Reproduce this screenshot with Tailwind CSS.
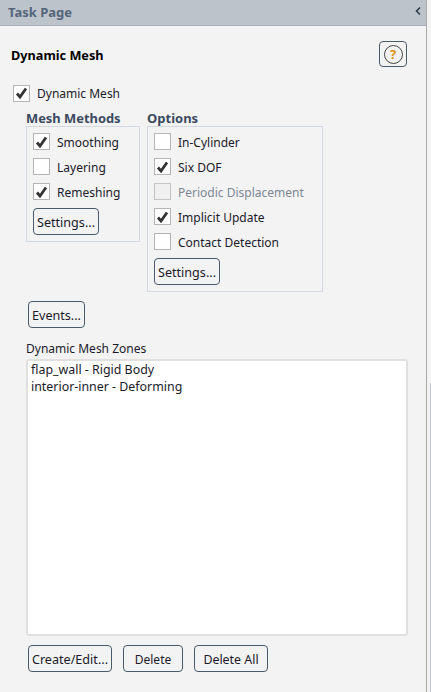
<!DOCTYPE html>
<html lang="en">
<head>
  <meta charset="UTF-8" />
  <title>Task Page</title>
  <script src="https://cdn.jsdelivr.net/npm/@tailwindcss/browser@4"></script>
</head>
<body class="w-[431px] h-[692px] overflow-hidden bg-[#f3f3f3] font-['Noto_Sans',sans-serif] text-[12px] text-[#1a1a2a]">
<div class="flex h-[692px]">
  <!-- Panel -->
  <div class="w-[427px] h-full border-r border-[#a9a9a9] flex flex-col">
    <header class="h-[26px] shrink-0 bg-[#bdc3cb] border-b border-[#a9aeb6] flex items-center justify-between pl-[8px] pr-[4px]">
      <span class="text-[13px] font-bold text-[#54657a]">Task Page</span>
      <svg width="8" height="10" viewBox="0 0 8 10" class="mb-[3px]"><path d="M6 1.5 2.5 5 6 8.5" fill="none" stroke="#2f3b4a" stroke-width="1.6"/></svg>
    </header>

    <div class="flex items-center justify-between pl-[11px] pr-[19px] pt-[15px]">
      <h1 class="text-[12.7px] font-bold text-black translate-y-[2px]">Dynamic Mesh</h1>
      <button class="w-[28px] h-[26px] border border-[#4a5a6c] rounded-[4px] flex items-center justify-center">
        <span class="w-[19px] h-[19px] border-[1.5px] border-[#444] rounded-full flex items-center justify-center text-[13px] font-bold text-[#d9920f] leading-none">?</span>
      </button>
    </div>

    <label class="flex items-center gap-[7px] pl-[13px] mt-[17px] h-[18px]">
      <span class="w-[17px] h-[17px] bg-white border border-[#b5b5b5] flex items-center justify-center">
        <svg width="13" height="12" viewBox="0 0 13 12"><path d="M2 6.5 5 10 11 1.5" fill="none" stroke="#333" stroke-width="2.8"/></svg>
      </span>
      <span class="translate-y-px">Dynamic Mesh</span>
    </label>

    <div class="flex items-start gap-[7px] pl-[26px] mt-[7px]">
      <!-- Mesh Methods -->
      <div>
        <div class="h-[17px] leading-[17px] text-[12.9px] font-bold text-[#3b4a5e] translate-y-px">Mesh Methods</div>
        <div class="w-[114px] h-[116px] border border-[#d3d8e2] pl-[6px] pt-[6px]">
          <div class="flex flex-col gap-[8px]">
            <label class="flex items-center gap-[7px] h-[17px]">
              <span class="w-[17px] h-[17px] bg-white border border-[#b5b5b5] flex items-center justify-center">
                <svg width="13" height="12" viewBox="0 0 13 12"><path d="M2 6.5 5 10 11 1.5" fill="none" stroke="#333" stroke-width="2.8"/></svg>
              </span>
              <span class="translate-y-px">Smoothing</span>
            </label>
            <label class="flex items-center gap-[7px] h-[17px]">
              <span class="w-[17px] h-[17px] bg-white border border-[#b5b5b5]"></span>
              <span class="translate-y-px">Layering</span>
            </label>
            <label class="flex items-center gap-[7px] h-[17px]">
              <span class="w-[17px] h-[17px] bg-white border border-[#b5b5b5] flex items-center justify-center">
                <svg width="13" height="12" viewBox="0 0 13 12"><path d="M2 6.5 5 10 11 1.5" fill="none" stroke="#333" stroke-width="2.8"/></svg>
              </span>
              <span class="translate-y-px">Remeshing</span>
            </label>
          </div>
          <button class="mt-[8px] w-[66px] h-[27px] border border-[#4a5a6c] rounded-[4px] text-[12.6px]"><span class="inline-block translate-y-[2px]">Settings...</span></button>
        </div>
      </div>

      <!-- Options -->
      <div>
        <div class="h-[17px] leading-[17px] text-[13px] font-bold text-[#3b4a5e] translate-y-px">Options</div>
        <div class="w-[176px] h-[166px] border border-[#d3d8e2] pl-[6px] pt-[6px]">
          <div class="flex flex-col gap-[8px]">
            <label class="flex items-center gap-[7px] h-[17px]">
              <span class="w-[17px] h-[17px] bg-white border border-[#b5b5b5]"></span>
              <span class="translate-y-px">In-Cylinder</span>
            </label>
            <label class="flex items-center gap-[7px] h-[17px]">
              <span class="w-[17px] h-[17px] bg-white border border-[#b5b5b5] flex items-center justify-center">
                <svg width="13" height="12" viewBox="0 0 13 12"><path d="M2 6.5 5 10 11 1.5" fill="none" stroke="#333" stroke-width="2.8"/></svg>
              </span>
              <span class="translate-y-px">Six DOF</span>
            </label>
            <label class="flex items-center gap-[7px] h-[17px] text-[#7d8794]">
              <span class="w-[17px] h-[17px] bg-[#f0f0f0] border border-[#c4c4c4]"></span>
              <span class="translate-y-px">Periodic Displacement</span>
            </label>
            <label class="flex items-center gap-[7px] h-[17px]">
              <span class="w-[17px] h-[17px] bg-white border border-[#b5b5b5] flex items-center justify-center">
                <svg width="13" height="12" viewBox="0 0 13 12"><path d="M2 6.5 5 10 11 1.5" fill="none" stroke="#333" stroke-width="2.8"/></svg>
              </span>
              <span class="translate-y-px">Implicit Update</span>
            </label>
            <label class="flex items-center gap-[7px] h-[17px]">
              <span class="w-[17px] h-[17px] bg-white border border-[#b5b5b5]"></span>
              <span class="translate-y-px">Contact Detection</span>
            </label>
          </div>
          <button class="mt-[8px] w-[66px] h-[27px] border border-[#4a5a6c] rounded-[4px] text-[12.6px]"><span class="inline-block translate-y-[2px]">Settings...</span></button>
        </div>
      </div>
    </div>

    <div class="pl-[28px] mt-[9px]">
      <button class="w-[57px] h-[27px] border border-[#4a5a6c] rounded-[4px] text-[12.6px]"><span class="inline-block translate-y-[2px]">Events...</span></button>
    </div>

    <div class="pl-[26px] mt-[11px] h-[20px] leading-[20px]">Dynamic Mesh Zones</div>
    <div class="ml-[26px] w-[382px] h-[277px] bg-white border-2 border-[#e0e0e0] rounded-[3px] px-[3px] leading-[17px] text-[12.4px]">
      <div>flap_wall - Rigid Body</div>
      <div>interior-inner - Deforming</div>
    </div>

    <div class="flex gap-[11px] pl-[28px] mt-[9px]">
      <button class="w-[84px] h-[27px] border border-[#4a5a6c] rounded-[4px] text-[12.6px]"><span class="inline-block translate-y-[2px]">Create/Edit...</span></button>
      <button class="w-[60px] h-[27px] border border-[#4a5a6c] rounded-[4px]"><span class="inline-block translate-y-px">Delete</span></button>
      <button class="w-[74px] h-[27px] border border-[#4a5a6c] rounded-[4px] text-[12.4px]"><span class="inline-block translate-y-[2px]">Delete All</span></button>
    </div>
  </div>

  <!-- Right strip -->
  <div class="w-[4px] h-full bg-[#f3f3f3] flex justify-end pt-[383px]">
    <div class="w-[1px] h-full bg-[#c0c5d2]"></div>
  </div>
</div>
</body>
</html>
